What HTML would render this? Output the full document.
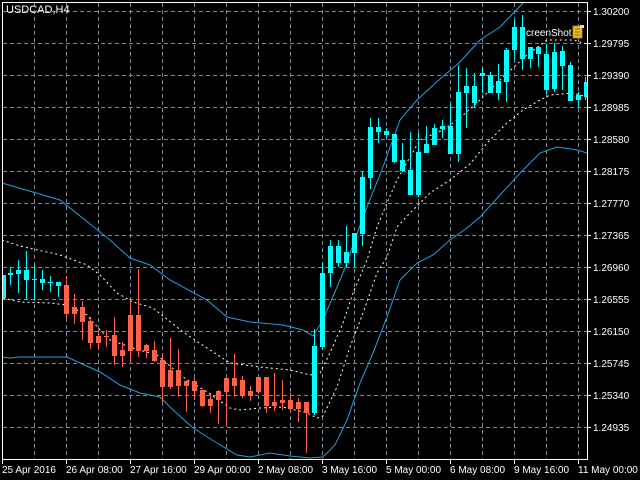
<!DOCTYPE html>
<html><head><meta charset="utf-8"><style>
html,body{margin:0;padding:0;background:#000;width:640px;height:480px;overflow:hidden}
svg{display:block}
text{font-family:"Liberation Sans",sans-serif;fill:#fff}
</style></head><body>
<svg width="640" height="480" viewBox="0 0 640 480" xmlns="http://www.w3.org/2000/svg">
<defs><clipPath id="c"><rect x="2" y="2" width="585" height="457"/></clipPath></defs>
<rect width="640" height="480" fill="#000"/>
<g stroke="#778899" stroke-width="1" stroke-dasharray="4,3" shape-rendering="crispEdges">
<path d="M34.5 3V459M66.5 3V459M98.5 3V459M130.5 3V459M162.5 3V459M194.5 3V459M226.5 3V459M258.5 3V459M290.5 3V459M322.5 3V459M354.5 3V459M386.5 3V459M418.5 3V459M450.5 3V459M482.5 3V459M514.5 3V459M546.5 3V459M578.5 3V459"/>
<path d="M3 11.5H587M3 43.5H587M3 75.5H587M3 107.5H587M3 139.5H587M3 171.5H587M3 203.5H587M3 235.5H587M3 267.5H587M3 299.5H587M3 331.5H587M3 363.5H587M3 395.5H587M3 427.5H587"/>
</g>
<g clip-path="url(#c)">
<g fill="none" stroke="#1fa3e0" stroke-width="1">
<polyline points="2,183 60,200 100,232 110,240 130,258 150,265 170,280 207,300 227,317 250,322 283,325 303,330 313,336 323,320 343,273 363,217 383,167 400,120 417,100 440,79 460,62 480,40 500,27 523,3 530,-5"/>
<polyline points="2,357 10,358 20,357 67,357 80,363 100,372 120,385 140,393 160,397 170,407 193,428 217,443 237,455 250,457 270,453 290,456 310,458 323,457 335,445 347,420 360,383 373,353 387,317 400,280 417,263 433,255 450,240 467,228 480,217 500,195 523,170 540,153 557,147 577,150 587,153"/>
</g>
<g fill="none" stroke="#fff" stroke-width="1" stroke-dasharray="2,3">
<polyline points="2,240 20,246 60,255 87,265 100,275 117,293 133,302 153,308 183,332 210,350 230,363 260,367 290,370 310,375 320,373 330,353 343,323 353,293 367,260 377,227 387,203 397,180 410,157 420,140 443,130 460,118 480,100 500,80 527,55 547,40 573,40 587,44"/>
<polyline points="3,298 20,302 50,303 67,305 87,315 100,330 110,340 133,348 157,355 183,377 207,392 230,408 240,410 260,408 283,407 307,413 317,418 323,416 337,387 350,347 363,313 377,273 387,257 397,227 410,213 430,193 450,180 470,164 487,143 507,123 523,110 540,100 550,95 573,93 587,97"/>
</g>
<g stroke="#ff6347" fill="#ff6347" shape-rendering="crispEdges">
<path fill="none" d="M66.5 276V318M74.5 294V324M82.5 301V340M90.5 317V349M98.5 330V349M106.5 330V347M114.5 317V365M122.5 342V367M130.5 299V361M138.5 269V357M146.5 344V358M154.5 341V362M162.5 353V402M170.5 338V389M178.5 349V397M186.5 380V412M194.5 377V400M202.5 390V407M210.5 393V413M218.5 390V424M226.5 378V425M234.5 354V397M242.5 376V398M250.5 386V401M258.5 377V394M266.5 377V413M274.5 373V411M282.5 380V410M290.5 393V412M298.5 398V422M306.5 402V453"/>
<g stroke="none">
<rect x="64" y="285" width="5" height="29"/><rect x="72" y="307" width="5" height="7"/><rect x="80" y="307" width="5" height="15"/><rect x="88" y="321" width="5" height="22"/><rect x="96" y="336" width="5" height="7"/><rect x="104" y="336" width="5" height="1"/><rect x="112" y="335" width="5" height="21"/><rect x="120" y="350" width="5" height="6"/><rect x="128" y="315" width="5" height="36"/><rect x="136" y="315" width="5" height="36"/><rect x="144" y="345" width="5" height="6"/><rect x="152" y="350" width="5" height="11"/><rect x="160" y="360" width="5" height="27"/><rect x="168" y="370" width="5" height="17"/><rect x="176" y="370" width="5" height="16"/><rect x="184" y="381" width="5" height="5"/><rect x="192" y="381" width="5" height="10"/><rect x="200" y="390" width="5" height="16"/><rect x="208" y="399" width="5" height="7"/><rect x="216" y="391" width="5" height="9"/><rect x="224" y="378" width="5" height="14"/><rect x="232" y="378" width="5" height="8"/><rect x="240" y="380" width="5" height="16"/><rect x="248" y="391" width="5" height="5"/><rect x="256" y="377" width="5" height="15"/><rect x="264" y="377" width="5" height="29"/><rect x="272" y="402" width="5" height="4"/><rect x="280" y="400" width="5" height="3"/><rect x="288" y="400" width="5" height="9"/><rect x="296" y="402" width="5" height="7"/><rect x="304" y="402" width="5" height="11"/>
</g></g>
<g stroke="#00ffff" fill="#00ffff" shape-rendering="crispEdges">
<path fill="none" d="M10.5 267V285M18.5 260V293M26.5 251V300M34.5 265V300M42.5 270V290M50.5 276V292M58.5 282V297M314.5 329V415M322.5 263V350M330.5 240V287M338.5 240V267M346.5 226V267M354.5 233V267M362.5 171V246M370.5 118V189M378.5 118V143M386.5 128V137M394.5 134V163M402.5 143V172M410.5 132V195M418.5 133V197M426.5 126V153M434.5 124V145M442.5 120V138M450.5 104V154M458.5 65V162M466.5 68V128M474.5 73V108M482.5 68V93M490.5 72V93M498.5 64V100M506.5 48V102M514.5 20V59M522.5 15V70M530.5 47V68M538.5 47V67M546.5 44V94M554.5 43V92M562.5 46V90M570.5 62V101M578.5 92V107M585.5 77V100"/>
<g stroke="none">
<rect x="3" y="275" width="3" height="23"/><rect x="8" y="273" width="5" height="2"/><rect x="16" y="270" width="5" height="4"/><rect x="24" y="270" width="5" height="10"/><rect x="32" y="279" width="5" height="1"/><rect x="40" y="279" width="5" height="4"/><rect x="48" y="282" width="5" height="1"/><rect x="56" y="282" width="5" height="4"/><rect x="312" y="346" width="5" height="67"/><rect x="320" y="273" width="5" height="74"/><rect x="328" y="246" width="5" height="27"/><rect x="336" y="246" width="5" height="17"/><rect x="344" y="252" width="5" height="11"/><rect x="352" y="233" width="5" height="20"/><rect x="360" y="177" width="5" height="57"/><rect x="368" y="127" width="5" height="51"/><rect x="376" y="127" width="5" height="5"/><rect x="384" y="131" width="5" height="4"/><rect x="392" y="134" width="5" height="28"/><rect x="400" y="160" width="5" height="11"/><rect x="408" y="170" width="5" height="25"/><rect x="416" y="152" width="5" height="43"/><rect x="424" y="144" width="5" height="9"/><rect x="432" y="128" width="5" height="17"/><rect x="440" y="126" width="5" height="3"/><rect x="448" y="126" width="5" height="28"/><rect x="456" y="92" width="5" height="62"/><rect x="464" y="86" width="5" height="7"/><rect x="472" y="86" width="5" height="17"/><rect x="480" y="73" width="5" height="3"/><rect x="488" y="75" width="5" height="18"/><rect x="496" y="81" width="5" height="12"/><rect x="504" y="50" width="5" height="32"/><rect x="512" y="27" width="5" height="23"/><rect x="520" y="27" width="5" height="32"/><rect x="528" y="47" width="5" height="12"/><rect x="536" y="47" width="5" height="7"/><rect x="544" y="54" width="5" height="36"/><rect x="552" y="52" width="5" height="37"/><rect x="560" y="51" width="5" height="15"/><rect x="568" y="65" width="5" height="36"/><rect x="576" y="95" width="5" height="5"/><rect x="584" y="82" width="3" height="15"/>
</g></g>
</g>
<rect x="2.5" y="2.5" width="585" height="457" fill="none" stroke="#fff" stroke-width="1" shape-rendering="crispEdges"/>
<g stroke="#fff" shape-rendering="crispEdges">
<path d="M587 11.5H591M587 43.5H591M587 75.5H591M587 107.5H591M587 139.5H591M587 171.5H591M587 203.5H591M587 235.5H591M587 267.5H591M587 299.5H591M587 331.5H591M587 363.5H591M587 395.5H591M587 427.5H591"/>
<path d="M2.5 459V464M66.5 459V464M130.5 459V464M194.5 459V464M258.5 459V464M322.5 459V464M386.5 459V464M450.5 459V464M514.5 459V464M578.5 459V464"/>
</g>
<g font-size="10">
<text x="593" y="15">1.30200</text><text x="593" y="47">1.29795</text><text x="593" y="79">1.29390</text><text x="593" y="111">1.28985</text><text x="593" y="143">1.28580</text><text x="593" y="175">1.28175</text><text x="593" y="207">1.27770</text><text x="593" y="239">1.27365</text><text x="593" y="271">1.26960</text><text x="593" y="303">1.26555</text><text x="593" y="335">1.26150</text><text x="593" y="367">1.25745</text><text x="593" y="399">1.25340</text><text x="593" y="431">1.24935</text>
<text x="2" y="473">25 Apr 2016</text><text x="66" y="473">26 Apr 08:00</text><text x="130" y="473">27 Apr 16:00</text><text x="194" y="473">29 Apr 00:00</text><text x="258" y="473">2 May 08:00</text><text x="322" y="473">3 May 16:00</text><text x="386" y="473">5 May 00:00</text><text x="450" y="473">6 May 08:00</text><text x="514" y="473">9 May 16:00</text><text x="578" y="473">11 May 00:00</text>
</g>
<text x="6" y="13" font-size="11">USDCAD,H4</text>
<text x="526" y="36" font-size="10">creenShot</text>
<g>
<rect x="573" y="26" width="9" height="12" fill="#f0c030" stroke="#b08020" stroke-width="1"/>
<path d="M575 29H580M575 32H580M575 35H580" stroke="#8a6010" stroke-width="1"/>
<rect x="580" y="25" width="4" height="3" fill="#f8e080"/>
</g>
</svg>
</body></html>
